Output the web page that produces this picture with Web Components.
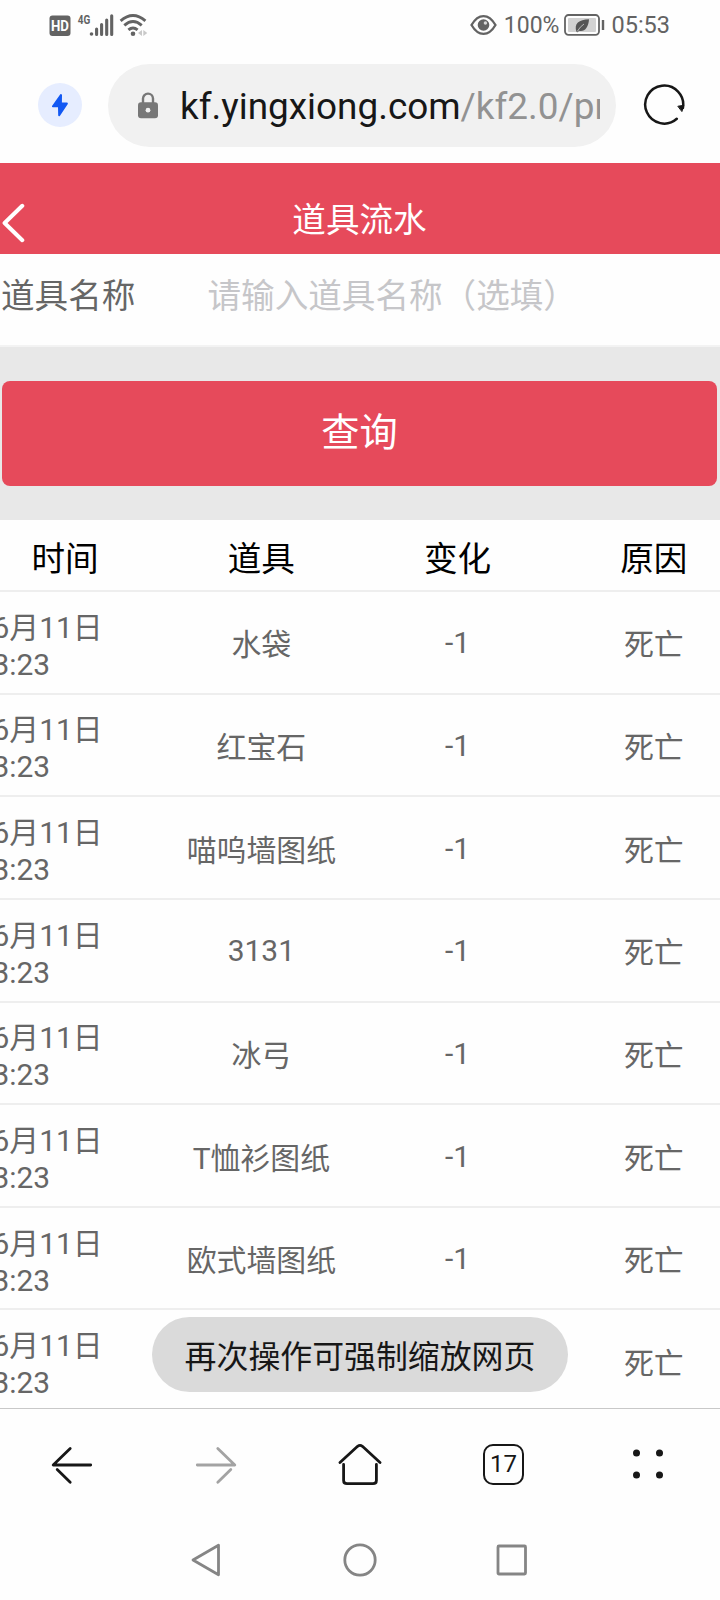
<!DOCTYPE html>
<html lang="zh-CN">
<head>
<meta charset="utf-8">
<title>道具流水</title>
<style>
  html, body { margin: 0; padding: 0; }
  body {
    width: 720px;
    height: 1600px;
    overflow: hidden;
    background: #fefefe;
    font-family: Roboto, "Noto Sans CJK SC", sans-serif;
  }
</style>
</head>
<body>
<phone-screen>
  <status-bar slot="top" battery="100%" time="05:53"></status-bar>
  <address-bar slot="top"><span>kf.yingxiong.com</span><span slot="path">/kf2.0/props</span></address-bar>
  <page-header>道具流水</page-header>
  <form-row label="道具名称" placeholder="请输入道具名称（选填）"></form-row>
  <query-button>查询</query-button>
  <record-table></record-table>
  <toast-message slot="toast">再次操作可强制缩放网页</toast-message>
  <tool-bar slot="bottom" tabs="17"></tool-bar>
  <system-nav slot="bottom"></system-nav>
</phone-screen>

<script>
class BaseElement extends HTMLElement {
  constructor() {
    super();
    this.attachShadow({ mode: 'open' });
    this.shadowRoot.innerHTML = this.render();
  }

  render() {
    return '';
  }
}

class PhoneScreen extends BaseElement {
  render() {
    return `
      <style>
        :host { display: flex; flex-direction: column; width: 720px; height: 1600px; }
        .page { position: relative; flex: 1; min-height: 0; overflow: hidden; background: #fefefe; }
        .toast { position: absolute; left: 0; right: 0; bottom: 16px; display: flex; justify-content: center; }
      </style>
      <slot name="top"></slot>
      <div class="page">
        <slot></slot>
        <div class="toast"><slot name="toast"></slot></div>
      </div>
      <slot name="bottom"></slot>
    `;
  }
}

class StatusBar extends BaseElement {
  render() {
    return `
      <style>
        :host {
          display: flex; justify-content: space-between; align-items: center;
          box-sizing: border-box; height: 48px; padding: 1px 50px 0 49px;
          color: #636363; font-size: 23.5px; line-height: 28px;
        }
        svg { display: block; }
        .right { display: flex; align-items: center; }
        .battery { margin-left: 7px; padding-top: 2px; font-size: 23px; }
        .battery + svg { margin: 0 6px 0 5px; }
      </style>
      <svg width="100" height="26" viewBox="49 11 100 26" fill="#636363">
        <rect x="49.5" y="14.5" width="21" height="20.5" rx="3"/>
        <text x="60" y="30.2" font-size="14.5" font-weight="700" fill="#fefefe" text-anchor="middle" textLength="18" lengthAdjust="spacingAndGlyphs">HD</text>
        <text x="77.7" y="22.8" font-size="13" font-weight="700" textLength="12.5" lengthAdjust="spacingAndGlyphs">4G</text>
        <circle cx="91.5" cy="33" r="1.8"/>
        <g stroke="#636363" stroke-width="3.1" stroke-linecap="round">
          <path d="M96.6 28V33.4M101.6 23.5V33.4M106.7 19V33.4M111.7 14.8V33.4"/>
        </g>
        <g fill="none" stroke="#636363" stroke-width="2.9">
          <path d="M120.6 19.8Q133 9.2 145.4 19.8"/>
          <path d="M124.3 24.4Q133 16.6 141.7 24.4"/>
          <path d="M128.4 28.8Q133 25 137.6 28.8"/>
        </g>
        <circle cx="133" cy="32.7" r="2.3"/>
        <path d="M138 32l4-3v6zM147.3 32l-4-3v6z" fill="#c9c9c9"/>
      </svg>
      <div class="right">
        <svg width="27" height="22" viewBox="0 0 27 22" fill="none" stroke="#636363">
          <path d="M1.5 11C5 5 9 2.1 13.5 2.1S22 5 25.5 11C22 17 18 19.9 13.5 19.9S5 17 1.5 11Z" stroke-width="2.3"/>
          <circle cx="13.5" cy="11" r="5.8" fill="#636363" stroke="none"/>
          <circle cx="15.4" cy="9" r="1.7" fill="#d8d8d8" stroke="none"/>
        </svg>
        <span class="battery">${this.getAttribute('battery')}</span>
        <svg width="41" height="22" viewBox="0 0 41 22">
          <rect x="1" y="1" width="34" height="19.8" rx="3.5" fill="#fefefe" stroke="#636363" stroke-width="1.8"/>
          <rect x="4" y="4" width="28" height="14" rx="1" fill="#d2d2d2"/>
          <path d="M12.5 18C9.5 9.5 15 5.4 25 5.2C24.6 13.2 20.5 18.3 15 16.7L13.8 18.2Z" fill="#555"/>
          <path d="M13.2 17.5Q16 12.6 20 10" stroke="#d2d2d2" stroke-width=".8" fill="none"/>
          <path d="M39 6V16" stroke="#636363" stroke-width="2.4"/>
        </svg>
        <span>${this.getAttribute('time')}</span>
      </div>
    `;
  }
}

class AddressBar extends BaseElement {
  render() {
    return `
      <style>
        :host {
          display: flex; align-items: center; box-sizing: border-box;
          height: 115px; padding: 0 34px 1px 38px;
        }
        svg { display: block; flex: none; }
        .field {
          display: flex; align-items: center; box-sizing: border-box;
          width: 508px; height: 83px; margin: 0 26px; padding: 0 16px 0 30px;
          border-radius: 42px; background: #f1f1f1;
        }
        .url {
          flex: 1; min-width: 0; overflow: hidden; white-space: nowrap;
          margin: 3px 0 0 22px; font-size: 36.9px; line-height: 50px; color: #171717;
        }
        .path { color: #929292; }
      </style>
      <svg width="44" height="44" viewBox="0 0 44 44">
        <circle cx="22" cy="22" r="22" fill="#e6edff"/>
        <path d="M22.3 11.2L14 23Q13.6 24.2 15 24.2H20L20.2 32.5Q20.8 33.8 22 32.7L29.8 21Q30.2 19.6 29 19.4H23.9L24 12Q23.4 10.4 22.3 11.2Z" fill="#1258f3"/>
      </svg>
      <div class="field">
        <svg width="20" height="27" viewBox="0 0 20 27">
          <path d="M5 12V6.6a5 5 0 0 1 10 0V12" fill="none" stroke="#777" stroke-width="2.4"/>
          <rect y="10.3" width="20" height="16" rx="3" fill="#777"/>
          <circle cx="10" cy="18.2" r="2.4" fill="#f1f1f1"/>
        </svg>
        <div class="url"><slot></slot><span class="path"><slot name="path"></slot></span></div>
      </div>
      <svg width="44" height="44" viewBox="0 0 44 44" fill="none" stroke="#171717" stroke-width="2.5" stroke-linecap="round">
        <path d="M34.8 35.8A19 19 0 1 1 40.9 25"/>
        <path d="M36.2 23.2L41.8 22.3L40 28.2Z" fill="#171717" stroke-width="1" stroke-linejoin="round"/>
      </svg>
    `;
  }
}

class PageHeader extends BaseElement {
  render() {
    return `
      <style>
        :host {
          display: grid; grid-template-columns: 1fr auto 1fr; align-items: center;
          box-sizing: border-box; height: 91px; padding: 21px 1px 0 0;
          background: #e64a5b; color: #fff; font-size: 33.6px; line-height: 48px;
        }
        svg { display: block; margin-top: 7px; }
        .title { padding-top: 3px; }
      </style>
      <svg width="26" height="40" viewBox="0 0 26 40" fill="none" stroke="#fff" stroke-width="4" stroke-linecap="round" stroke-linejoin="round">
        <path d="M22.3 2.8L4.6 20L22.3 37.2"/>
      </svg>
      <div class="title"><slot></slot></div>
    `;
  }
}

class FormRow extends BaseElement {
  render() {
    return `
      <style>
        :host {
          display: flex; box-sizing: border-box; height: 93px; padding-top: 19px;
          border-bottom: 2px solid #f3f3f3; background: #fefefe;
          font-size: 33.6px; line-height: 48px;
        }
        .label { width: 207.5px; color: #666; text-indent: 1px; }
        .placeholder { color: #c6c6c9; }
      </style>
      <div class="label">${this.getAttribute('label')}</div>
      <div class="placeholder">${this.getAttribute('placeholder')}</div>
    `;
  }
}

class QueryButton extends BaseElement {
  render() {
    return `
      <style>
        :host { display: block; box-sizing: border-box; height: 173px; padding: 34px 3px 34px 2px; background: #e8e8e8; }
        .button {
          display: flex; align-items: center; justify-content: center;
          box-sizing: border-box; height: 105px; padding-bottom: 8px;
          border-radius: 8px; background: #e64a5b; color: #fff; font-size: 38.2px;
        }
      </style>
      <div class="button"><slot></slot></div>
    `;
  }
}

const records = [
  ['水袋', '-1', '死亡'],
  ['红宝石', '-1', '死亡'],
  ['喵呜墙图纸', '-1', '死亡'],
  ['3131', '-1', '死亡'],
  ['冰弓', '-1', '死亡'],
  ['T恤衫图纸', '-1', '死亡'],
  ['欧式墙图纸', '-1', '死亡'],
  ['', '', '死亡']
];

class RecordTable extends BaseElement {
  render() {
    const rows = records.map(cells => `
      <div class="row">
        <div class="time">6月11日<br>3:23</div>
        ${cells.map(text => `<div class="${/^[-\d]/.test(text) ? 'number' : 'cell'}">${text}</div>`).join('')}
      </div>`).join('');
    return `
      <style>
        :host { display: block; width: 785px; margin-left: -33px; background: #fefefe; text-align: center; }
        .head, .row {
          display: grid; grid-template-columns: repeat(4, 1fr); align-items: center;
          box-sizing: border-box; border-bottom: 2px solid #eee;
        }
        .head { height: 72px; padding-top: 10px; color: #000; font-size: 33.6px; line-height: 48px; }
        .row { height: 102.65px; color: #666; font-size: 29.9px; line-height: 37px; }
        .time { padding: 7px 0 0 25.5px; text-align: left; }
        .number { padding-top: 1px; }
        .cell { padding-top: 5px; }
      </style>
      <div class="head"><div>时间</div><div>道具</div><div>变化</div><div>原因</div></div>
      ${rows}
    `;
  }
}

class ToastMessage extends BaseElement {
  render() {
    return `
      <style>
        :host {
          display: flex; align-items: center; box-sizing: border-box; height: 75px;
          padding: 4px 32.5px 0; border-radius: 38px; background: #dadada;
          color: #171717; font-size: 31.9px; line-height: 46px; white-space: nowrap;
        }
      </style>
      <slot></slot>
    `;
  }
}

class ToolBar extends BaseElement {
  render() {
    return `
      <style>
        :host {
          display: grid; grid-template-columns: repeat(5, 144px); place-items: center;
          box-sizing: border-box; height: 112px; border-top: 1px solid #c8c8c8; background: #fefefe;
        }
        svg { display: block; fill: none; stroke: #171717; stroke-width: 2.8; stroke-linecap: round; stroke-linejoin: round; }
        .forward { stroke: #a3a3a3; }
        .tabs {
          display: flex; align-items: center; justify-content: center;
          box-sizing: border-box; width: 41px; height: 41px; padding-bottom: 2px; margin-right: 1px;
          border: 2.6px solid #171717; border-radius: 10px; color: #171717; font-size: 24px;
        }
      </style>
      <svg width="44" height="44" viewBox="0 0 44 44"><path d="M20.2 5.5L3.2 22H40.7M7.2 26.5L20.2 39.2"/></svg>
      <svg class="forward" width="44" height="44" viewBox="0 0 44 44"><path d="M23.8 5.5L40.8 22H3.3M36.8 26.5L23.8 39.2"/></svg>
      <svg width="44" height="44" viewBox="0 0 44 44"><path d="M2 19.5L19.6 3.3Q22 1.5 24.4 3.3L42 19.5M5.6 21.5V37.5Q5.6 40.7 9 40.7H35Q38.4 40.7 38.4 37.5V21.5"/></svg>
      <div class="tabs">${this.getAttribute('tabs')}</div>
      <svg width="44" height="44" viewBox="0 0 44 44"><path d="M10.5 10h.01M33.5 10h.01M10.5 32h.01M33.5 32h.01" stroke-width="7"/></svg>
    `;
  }
}

class SystemNav extends BaseElement {
  render() {
    return `
      <style>
        :host {
          display: grid; grid-template-columns: repeat(3, 152px); place-content: center; place-items: center;
          box-sizing: border-box; height: 80px; background: #fefefe;
        }
        svg { display: block; fill: none; stroke: #858585; stroke-width: 2.8; stroke-linejoin: round; }
      </style>
      <svg width="34" height="36" viewBox="0 0 34 36"><path d="M2 18L27.5 3.2V32.8Z"/></svg>
      <svg width="34" height="36" viewBox="0 0 34 36"><circle cx="17" cy="18" r="15.2"/></svg>
      <svg width="34" height="36" viewBox="0 0 34 36"><rect x="3" y="4" width="27.5" height="28" rx="1"/></svg>
    `;
  }
}

customElements.define('phone-screen', PhoneScreen);
customElements.define('status-bar', StatusBar);
customElements.define('address-bar', AddressBar);
customElements.define('page-header', PageHeader);
customElements.define('form-row', FormRow);
customElements.define('query-button', QueryButton);
customElements.define('record-table', RecordTable);
customElements.define('toast-message', ToastMessage);
customElements.define('tool-bar', ToolBar);
customElements.define('system-nav', SystemNav);
</script>
</body>
</html>
